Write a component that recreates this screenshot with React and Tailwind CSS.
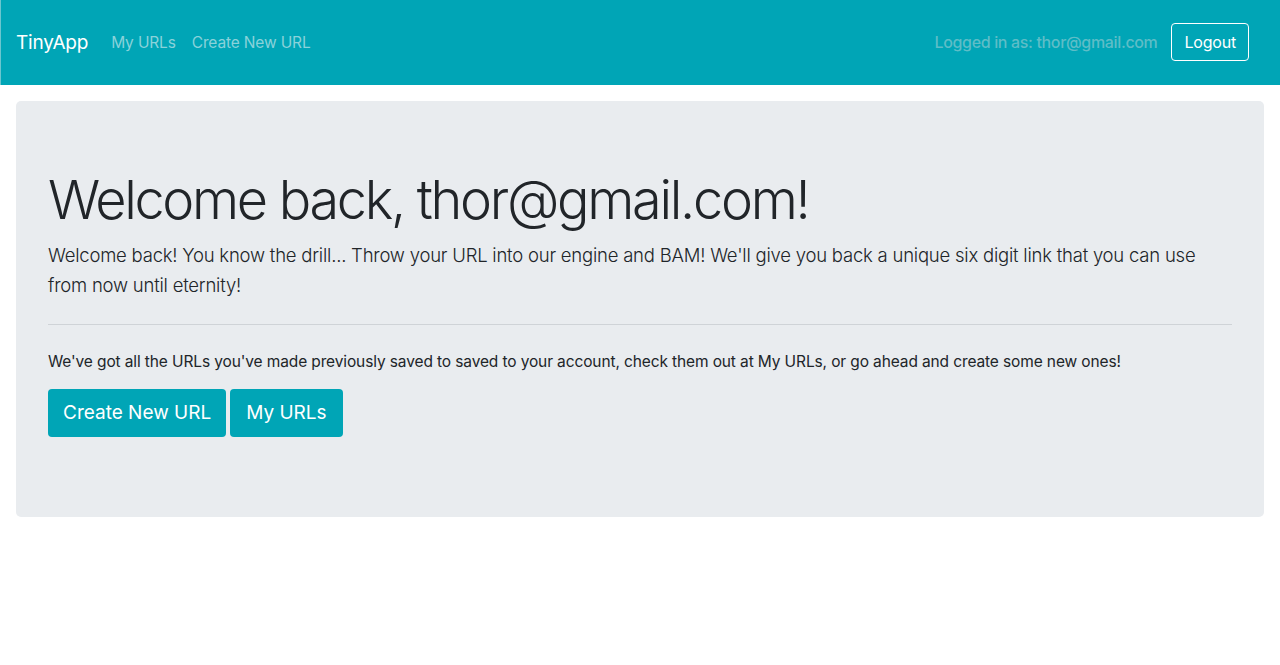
import React from 'react';

function App() {
  return (
    <div className="min-h-[665px] bg-white" style={{ fontFamily: 'Inter, "Noto Sans", sans-serif' }}>
      <nav className="h-[85px] bg-[#00a5b6] border-l border-[#6cc6cf] flex items-center justify-between pl-[15px] pr-[31px]">
        <div className="flex items-center">
          <a className="text-white text-[19px] mr-[23px] tracking-[-0.2px] mt-[2px]">TinyApp</a>
          <a className="text-[#8ad2da] text-[15.5px] tracking-[-0.15px] mr-[16px]">My URLs</a>
          <a className="text-[#8ad2da] text-[15.5px] tracking-[-0.15px]">Create New URL</a>
        </div>
        <div className="flex items-center -mt-[1px]">
          <span className="text-[#5ebdc7] text-[16px] font-medium tracking-[-0.35px] mr-[14px]">Logged in as: thor@gmail.com</span>
          <button className="h-[38px] px-[12px] border border-white rounded-[4px] text-white text-[16px] tracking-[-0.2px]">Logout</button>
        </div>
      </nav>
      <div className="px-4 pt-4">
        <div className="bg-[#e9ecef] rounded-[5px] px-8 pt-[64px] h-[416px]">
          <h1 className="text-[54px] font-light text-[#212529] leading-[1.3] tracking-[-2.3px]">Welcome back, thor@gmail.com!</h1>
          <p className="mt-[5px] text-[18.5px] font-light text-[#212529] leading-[30px] tracking-[-0.22px]">
            Welcome back! You know the drill... Throw your URL into our engine and BAM! We'll give you back a unique six digit link that you can use from now until eternity!
          </p>
          <hr className="mt-[24px] mb-[25px] border-t border-[#cfd3d7]" />
          <p className="text-[15.5px] text-[#212529] leading-[24px] tracking-[-0.12px]">
            We've got all the URLs you've made previously saved to saved to your account, check them out at My URLs, or go ahead and create some new ones!
          </p>
          <div className="flex gap-[4px] mt-[15px]">
            <a className="h-[48px] px-[15px] flex items-center bg-[#00a5b6] text-white text-[19px] rounded-[4px]">Create New URL</a>
            <a className="h-[48px] px-[16px] flex items-center bg-[#00a5b6] text-white text-[19px] rounded-[4px]">My URLs</a>
          </div>
        </div>
      </div>
    </div>
  );
}

export default App;
